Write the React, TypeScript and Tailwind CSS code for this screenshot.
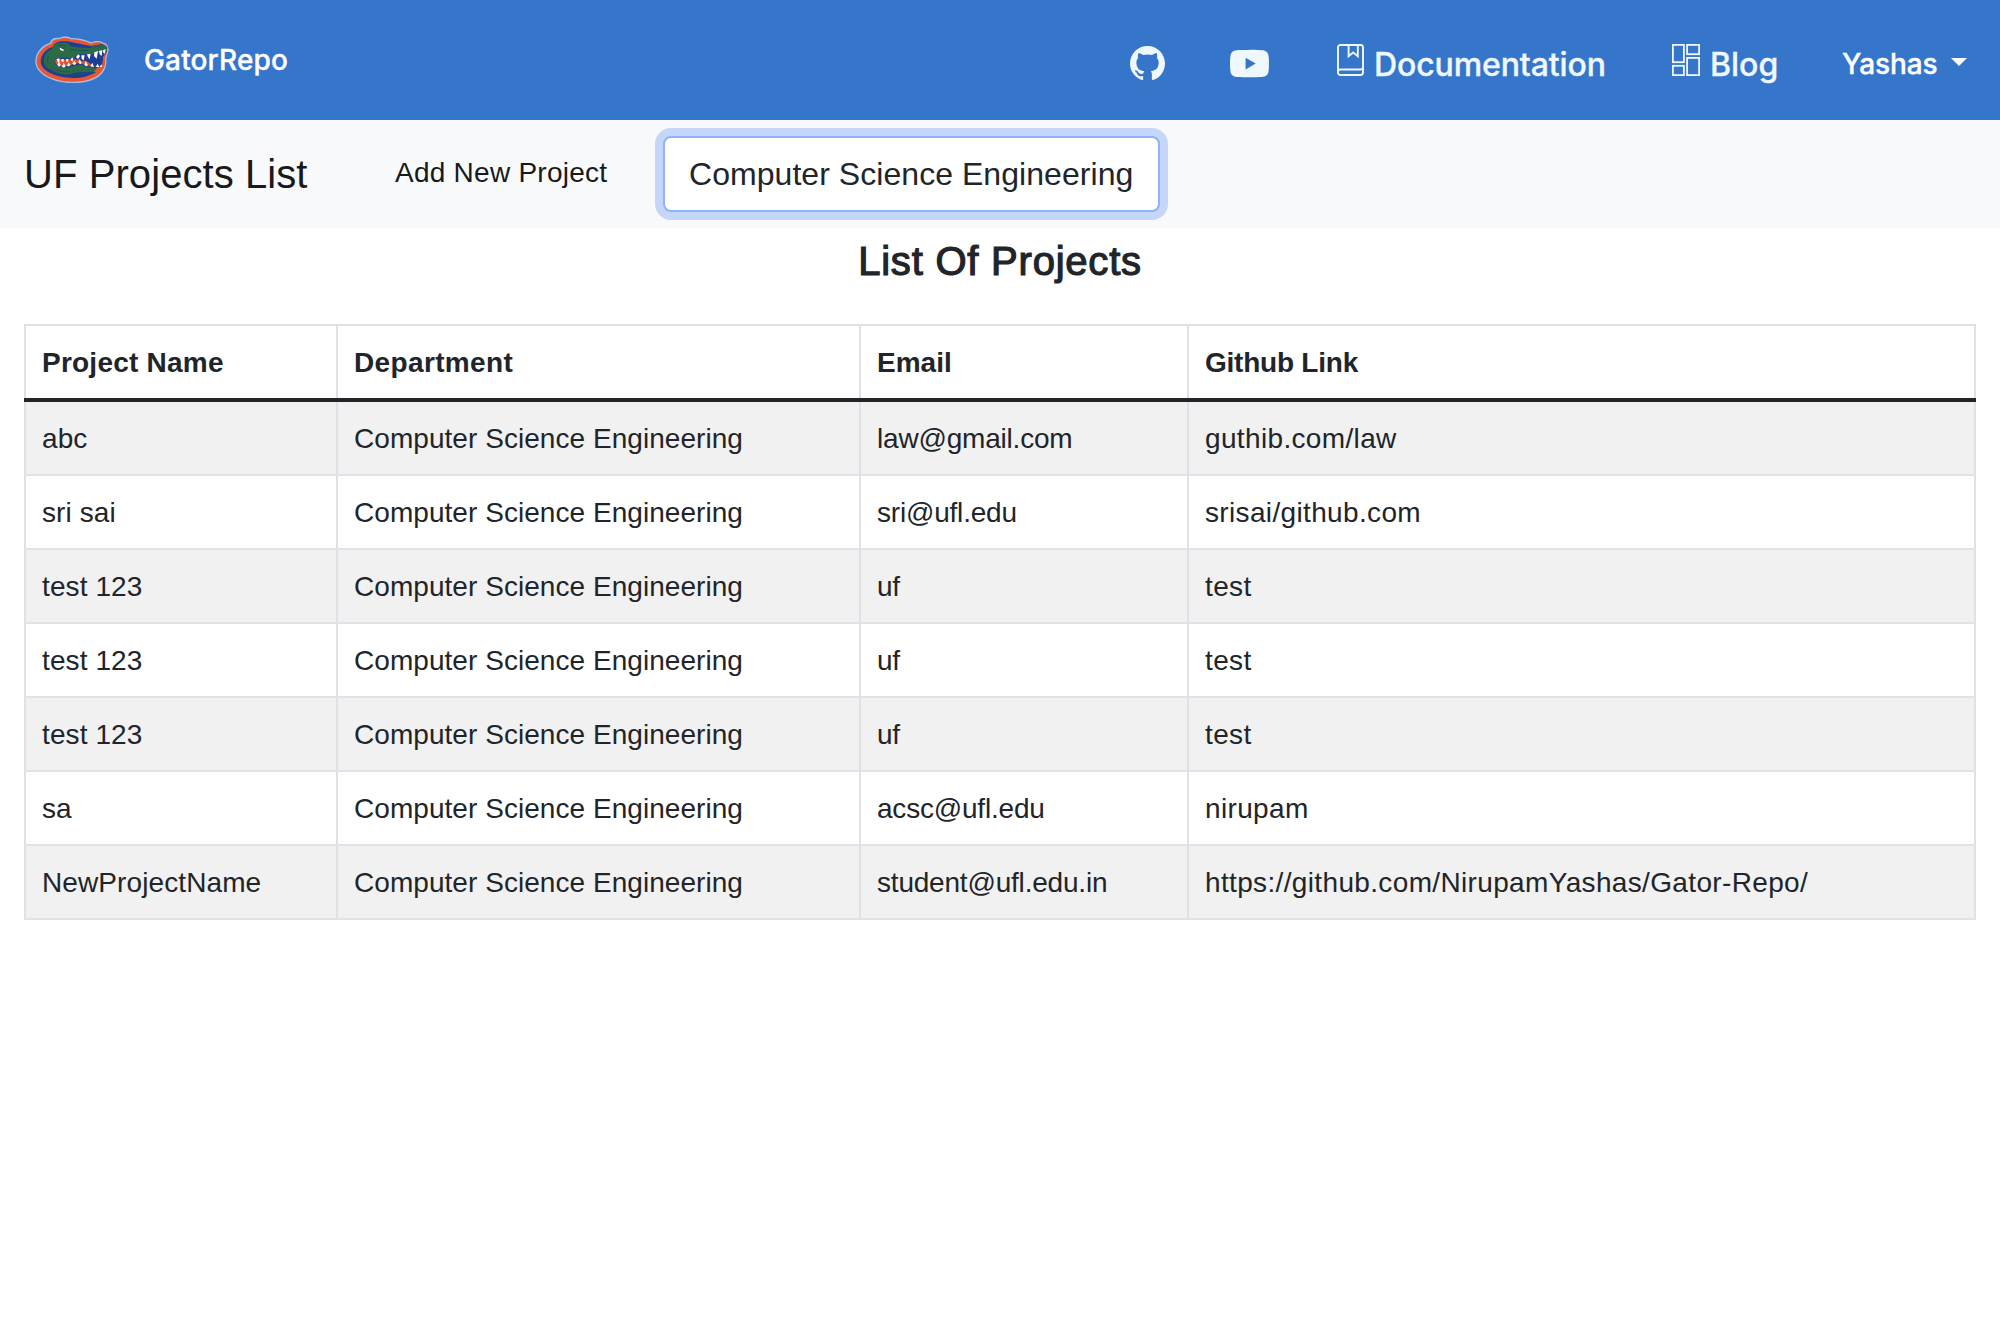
import { BsGithub, BsYoutube } from "react-icons/bs";

const headings = [
  { label: "Project Name", tracking: "tracking-[0.23px]" },
  { label: "Department", tracking: "tracking-[0.36px]" },
  { label: "Email", tracking: "tracking-normal" },
  { label: "Github Link", tracking: "tracking-[-0.23px]" },
];

const rows = [
  ["abc", "Computer Science Engineering", "law@gmail.com", "guthib.com/law"],
  ["sri sai", "Computer Science Engineering", "sri@ufl.edu", "srisai/github.com"],
  ["test 123", "Computer Science Engineering", "uf", "test"],
  ["test 123", "Computer Science Engineering", "uf", "test"],
  ["test 123", "Computer Science Engineering", "uf", "test"],
  ["sa", "Computer Science Engineering", "acsc@ufl.edu", "nirupam"],
  ["NewProjectName", "Computer Science Engineering", "student@ufl.edu.in", "https://github.com/NirupamYashas/Gator-Repo/"],
];

const columnTracking = ["tracking-[0.1px]", "tracking-[0.05px]", "tracking-[-0.2px]", "tracking-[0.35px]"];

function GatorLogo() {
  return (
    <svg className="ml-5 h-20 w-[120px] shrink-0" viewBox="0 0 360 240" fill="none">
      <path d="M46 125C46 98 64 76 90 68C94 56 103 51 116 54C126 49 142 47 153 54C174 54 196 58 214 67C226 62 243 61 250 68C260 70 266 78 266 90C264 100 261 108 259 117C261 140 252 158 236 170C216 184 186 190 156 189C92 188 46 158 46 125Z" fill="#a9bde3" />
      <path d="M50 125C50 100 68 79 94 71C97 60 106 56 117 58C128 53 142 52 152 58C174 58 196 63 213 71C228 66 240 65 248 71C258 73 262 80 262 90C260 102 257 110 255 118C257 138 249 154 234 166C214 180 186 186 156 185C96 184 50 157 50 125Z" fill="#e9552f" />
      <path d="M62 126C63 101 78 87 98 80C104 66 120 61 150 65L212 78L246 72L262 81L260 97L249 110L246 144L229 156C203 170 182 175 157 174C105 172 64 152 62 126Z" fill="#1c3f94" />
      <path d="M72 128C70 108 80 94 96 87C100 74 110 67 122 70C132 65 145 67 150 78C170 84 192 83 211 84C220 74 236 72 246 76C258 74 265 84 259 94C248 98 238 94 228 99C212 105 194 101 180 103C168 108 162 114 145 115C126 111 112 111 107 119C102 129 108 137 122 142C143 147 160 137 180 134C198 135 207 144 226 144C236 146 246 148 240 153C214 157 188 155 164 158C140 168 114 164 96 151C82 145 74 139 72 128Z" fill="#2b6b45" />
      <path d="M104 124Q104 113 120 116Q146 119 166 116L181 121L202 122L222 131L226 139Q213 141 198 136L176 130Q146 138 126 142Q105 138 104 124Z" fill="#e2502f" stroke="#26417f" strokeWidth="2.5" />
      <path d="M222 155L252 118L256 120Q256 142 240 157Z" fill="#e9552f" />
      <path d="M206 112L250 106L246 140L224 140L198 122Z" fill="#1c3f94" />
      <path d="M110 117l8-2 1 9-5 4Zm14 0 8 1-2 9-6-3Zm14 1 8-1-2 8-5 0Zm13-1 9-5-3 13Zm17-6 7-8 5 5-6 10Zm16-5 10 0-3 15-6-4Zm17-3 11-1-3 16-5-6Zm22-6 11-4-4 23-8-8Zm14-4 10-2-2 17-6-5Zm12-2 8-3-2 13-5-2Z" fill="#fff" />
      <path d="m112 134 5-10 5 11-5 5Zm14 6 5-12 6 11-5 4Zm15-2 4-11 7 8-5 4Zm16-7 6-9 6 9-6 4Zm18-4 4-10 6 13-5 3Zm18 7 4-11 7 13-6 3Zm18 5 6-11 5 14Zm16 2 6-10 5 10Zm12-1 5-7 3 8Z" fill="#fff" />
      <path d="M118 82l3 8 9 4 1-6Z" fill="#fff" />
      <path d="M117 80l16 8M112 78Q128 70 140 79M221 82Q234 75 243 80M150 88Q180 94 209 91" stroke="#1f4a62" strokeWidth="2.5" />
      <path d="M94 142Q120 160 150 154M150 166L225 158M85 109Q80 120 84 132" stroke="#204f74" strokeWidth="2.5" />
    </svg>
  );
}

function BookIcon() {
  return (
    <svg className="h-8 w-[27px]" viewBox="0 0 27 32" fill="none" stroke="currentColor" strokeWidth="1.9">
      <rect x="1" y="1" width="25" height="30" rx="2.4" />
      <path d="M1 27.6Q1.2 25.5 3.6 25.5H23.2Q25.6 25.5 26 23.5M11.6 1V12.2L16.2 8.5L20.8 12.2V1" />
    </svg>
  );
}

function BoardIcon() {
  return (
    <svg className="h-8 w-7" viewBox="0 0 28 32" fill="none" stroke="currentColor" strokeWidth="1.8">
      <rect x=".9" y=".9" width="11" height="17.3" />
      <rect x="15.1" y=".9" width="12" height="9.3" />
      <rect x=".9" y="21.8" width="11" height="9.3" />
      <rect x="15.1" y="13.9" width="12" height="17.2" />
    </svg>
  );
}

export default function App() {
  return (
    <div className="h-[1320px] w-[2000px] overflow-hidden bg-white font-['Liberation_Sans',Arial,sans-serif] text-[#212529]">
      <header className="flex h-[120px] items-center bg-[#3575ca] font-[Inter,sans-serif] font-medium text-[#f0f8ff] [-webkit-text-stroke:0.35px_currentColor]">
        <GatorLogo />
        <span className="ml-1 w-[146px] text-[28px] leading-10 tracking-[0.15px] whitespace-nowrap text-white">GatorRepo</span>
        <nav className="ml-auto flex h-full items-center whitespace-nowrap">
          <a className="mt-[6px] mr-[65px]"><BsGithub className="size-[35px]" /></a>
          <a className="mt-[8px] mr-[68px]"><BsYoutube className="size-[39px]" /></a>
          <a className="flex w-[335px] items-center">
            <BookIcon />
            <span className="mt-[10px] ml-[10px] text-[32px] leading-10 tracking-[-0.12px]">Documentation</span>
          </a>
          <a className="flex w-[170px] items-center">
            <BoardIcon />
            <span className="mt-[10px] ml-[10px] text-[32px] leading-10">Blog</span>
          </a>
          <a className="mt-2 flex w-[158px] items-center text-white">
            <span className="w-[109px] text-[28px] leading-10 tracking-[-0.1px]">Yashas</span>
            <span className="-mt-1 border-x-[8.5px] border-t-8 border-x-transparent border-t-white" />
          </a>
        </nav>
      </header>

      <section className="flex h-[108px] items-center bg-[#f8f9fa] pl-6 whitespace-nowrap">
        <h1 className="w-[371px] text-[40px] leading-[48px] tracking-[0.08px] text-[#18191a]">UF Projects List</h1>
        <a className="w-[268px] pb-[3px] text-[28px] leading-[42px] tracking-[0.25px] text-[#18191a]">Add New Project</a>
        <div className="flex h-[76px] w-[497px] items-center rounded-lg border-2 border-[#8bb5f8] bg-white pl-6 text-[32px] leading-[48px] tracking-[0.05px] shadow-[0_0_0_8px_#c5d6f8]">
          Computer Science Engineering
        </div>
      </section>

      <main className="px-6">
        <h2 className="mb-[39px] pt-[9px] text-center text-[40px] leading-[48px] tracking-[0.78px] [-webkit-text-stroke:1.2px_#212529]">List Of Projects</h2>
        <table className="w-[1952px] table-fixed border-separate border-spacing-0 text-left text-[28px] leading-[42px]">
          <colgroup>
            <col className="w-[314px]" />
            <col className="w-[523px]" />
            <col className="w-[328px]" />
            <col />
          </colgroup>
          <thead>
            <tr className="h-[74px]">
              {headings.map(({ label, tracking }) => (
                <th key={label} className={`border-t-2 border-r-2 border-[#dee2e6] px-4 pt-0.5 pb-0 font-bold first:border-l-2 ${tracking}`}>{label}</th>
              ))}
            </tr>
            <tr className="h-1">
              <td colSpan={4} className="h-1 bg-[#212529] p-0" />
            </tr>
          </thead>
          <tbody>
            {rows.map((row, i) => (
              <tr key={i} className="h-[74px] odd:bg-[#f1f1f1]">
                {row.map((cell, j) => (
                  <td key={j} className={`border-r-2 border-b-2 border-[#dee2e6] px-4 pt-0.5 pb-0 first:border-l-2 ${columnTracking[j]}`}>{cell}</td>
                ))}
              </tr>
            ))}
          </tbody>
        </table>
      </main>
    </div>
  );
}
